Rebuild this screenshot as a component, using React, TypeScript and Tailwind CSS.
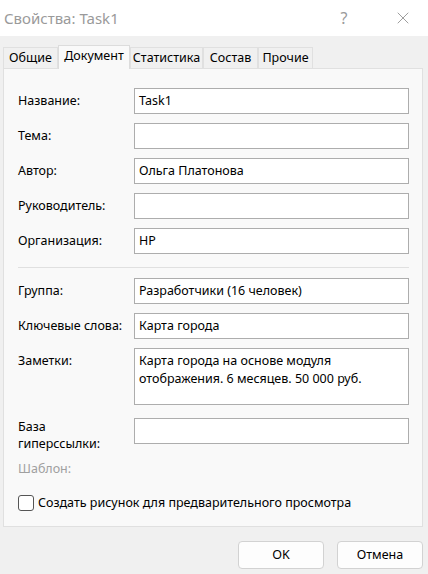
import { X } from 'lucide-react'

const TABS = ['Общие', 'Документ', 'Статистика', 'Состав', 'Прочие']
const TAB_WIDTHS = ['w-[55px]', 'w-[72px]', 'w-[73px]', 'w-[55px]', 'w-[55px]']

function Field({ label, value }: { label: string; value?: string }) {
  return (
    <>
      <div className="flex items-center h-[26px]">{label}</div>
      <div className="h-[26px] bg-white border border-[#adadad] flex items-center px-[4px]">{value}</div>
    </>
  )
}

export default function App() {
  return (
    <div
      className="w-[428px] h-[574px] bg-[#f0f0f0] text-[12.5px] text-black flex flex-col"
      style={{ fontFamily: '"Noto Sans", "Open Sans", sans-serif' }}
    >
      <div className="h-[36px] bg-white flex items-center pl-[4px] shrink-0">
        <span className="text-[15px] text-[#9a9a9a] flex-1">Свойства: Task1</span>
        <span className="text-[16px] text-[#9a9a9a] w-[68px] text-center">?</span>
        <span className="w-[50px] flex justify-center text-[#8a8a8a]">
          <X size={20} strokeWidth={1} />
        </span>
      </div>

      <div className="flex items-end pl-[3px] pt-[9px] h-[33px] relative z-10 shrink-0">
        {TABS.map((t, i) =>
          i === 1 ? (
            <div
              key={t}
              className={`${TAB_WIDTHS[i]} h-[24px] bg-[#f9f9f9] border border-b-0 border-[#dcdcdc] flex items-start justify-center pt-[1px]`}
            >
              {t}
            </div>
          ) : (
            <div
              key={t}
              className={`${TAB_WIDTHS[i]} h-[22px] bg-[#f0f0f0] border border-[#e0e0e0] flex items-center justify-center`}
            >
              {t}
            </div>
          )
        )}
      </div>

      <div className="ml-[3px] w-[420px] -mt-[1px] h-[459px] bg-[#f9f9f9] border border-[#e0e0e0] pl-[14px] pr-[13px] pt-[19px] shrink-0">
        <div className="grid grid-cols-[116px_1fr] gap-y-[9px]">
          <Field label="Название:" value="Task1" />
          <Field label="Тема:" />
          <Field label="Автор:" value="Ольга Платонова" />
          <Field label="Руководитель:" />
          <Field label="Организация:" value="HP" />
        </div>

        <div className="h-px bg-[#e0e0e0] mt-[13px] mb-[10px]" />

        <div className="grid grid-cols-[116px_1fr] gap-y-[9px]">
          <Field label="Группа:" value="Разработчики (16 человек)" />
          <Field label="Ключевые слова:" value="Карта города" />
          <div className="pt-[4px] leading-[17px]">Заметки:</div>
          <div className="h-[57px] bg-white border border-[#adadad] px-[4px] pt-[3px] leading-[18px]">
            Карта города на основе модуля
            <br />
            отображения. 6 месяцев. 50 000 руб.
          </div>
        </div>

        <div className="grid grid-cols-[116px_1fr] mt-[13px]">
          <div className="leading-[17px] flex items-center">
            <span>
              База
              <br />
              гиперссылки:
            </span>
          </div>
          <div className="h-[26px] bg-white border border-[#adadad]" />
        </div>

        <div className="text-[#a0a0a0] mt-[8px] h-[17px] leading-[17px]">Шаблон:</div>

        <label className="flex items-center gap-[4px] mt-[17px]">
          <span className="w-[16px] h-[16px] rounded-[3px] border border-[#555] bg-white" />
          <span>Создать рисунок для предварительного просмотра</span>
        </label>
      </div>

      <div className="flex justify-end gap-[13px] pr-[5px] pt-[14px]">
        <button className="w-[86px] h-[28px] rounded-[4px] bg-[#fdfdfd] border border-[#d2d2d2]">OK</button>
        <button className="w-[86px] h-[28px] rounded-[4px] bg-[#fdfdfd] border border-[#d2d2d2]">Отмена</button>
      </div>
    </div>
  )
}
